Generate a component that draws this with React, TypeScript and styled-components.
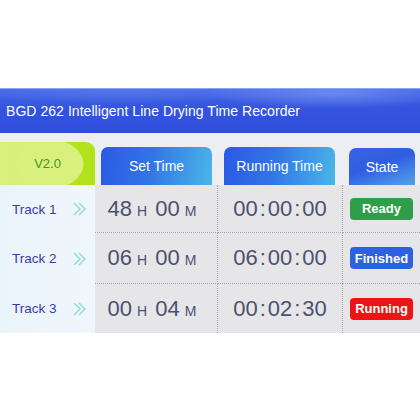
import React from 'react';
import styled, { createGlobalStyle } from 'styled-components';

const GlobalStyle = createGlobalStyle`
  html, body {
    margin: 0;
    padding: 0;
    background: #ffffff;
    font-family: "Liberation Sans", Arial, sans-serif;
  }
`;

const Page = styled.div`
  width: 420px;
  height: 420px;
  padding-top: 88px;
  box-sizing: border-box;
  background: #ffffff;
  overflow: hidden;
`;

const Banner = styled.div`
  height: 45px;
  display: flex;
  align-items: center;
  padding-left: 6px;
  box-sizing: border-box;
  border-top: 1px solid #8ea6f2;
  background:
    radial-gradient(ellipse 180px 22px at 330px 4px, rgba(140, 170, 250, 0.55), transparent 70%),
    radial-gradient(ellipse 260px 18px at 120px 2px, rgba(120, 150, 245, 0.35), transparent 70%),
    linear-gradient(180deg, #4566e4 0%, #3454df 45%, #2f4ddb 100%);
  color: #ffffff;
  font-size: 14px;
  letter-spacing: 0.05px;
`;

const Board = styled.div`
  display: grid;
  grid-template-columns: 95px 123px 125px 77px;
  grid-template-rows: 52px 48px 51px 49px;
  background: #eceef1;
`;

const VersionTab = styled.div`
  margin-top: 9px;
  border-top-right-radius: 9px;
  display: flex;
  align-items: center;
  justify-content: center;
  color: #4b9422;
  font-size: 13px;
  background:
    radial-gradient(ellipse 34px 25px at 50px 22px, #d9f07c 0 96%, transparent 100%),
    linear-gradient(90deg, #d9f07c 0%, #d6ef74 52%, #b6e520 56%, #b2e21a 100%);
`;

const HeadCell = styled.div<{ $left: number; $right: number }>`
  padding: 0 ${(p) => p.$right}px 0 ${(p) => p.$left}px;
  display: flex;
  align-items: flex-end;
`;

const HeadTab = styled.div`
  flex: 1;
  height: 38px;
  border-radius: 7px 7px 0 0;
  display: flex;
  align-items: center;
  justify-content: center;
  color: #ffffff;
  font-size: 14px;
  background: linear-gradient(100deg, #2b59e4 0%, #3275e6 45%, #4ab6e8 100%);
`;

const StateTab = styled(HeadTab)`
  height: 37px;
  background: linear-gradient(160deg, #3a62e2 0%, #2f5ee2 45%, #55a2ea 100%);
`;

const TrackCell = styled.div`
  display: flex;
  align-items: center;
  padding-left: 12px;
  gap: 15px;
  color: #3d3d9f;
  font-size: 13.5px;
  background: linear-gradient(90deg, #eaf4fb 0%, #f0f7fc 100%);
`;

const BodyCell = styled.div<{ $line?: boolean; $divider?: boolean }>`
  display: flex;
  align-items: center;
  justify-content: center;
  background: #e6e6e8;
  color: #4c5170;
  border-bottom: ${(p) => (p.$line ? '1px dotted #a9a9ad' : 'none')};
  border-right: ${(p) => (p.$divider ? '1px dotted #a9a9ad' : 'none')};
  box-sizing: border-box;
`;

const Big = styled.span`
  font-size: 22px;
`;

const Unit = styled.span`
  font-size: 14px;
  margin: 4px 8px 0 5px;
`;

const Colon = styled.span`
  font-size: 22px;
  margin: 0 2px;
`;

const Badge = styled.div<{ $color: string }>`
  width: 63px;
  height: 22px;
  border-radius: 4px;
  background: ${(p) => p.$color};
  color: #ffffff;
  font-weight: bold;
  font-size: 13px;
  display: flex;
  align-items: center;
  justify-content: center;
`;

const StateCell = styled(BodyCell)`
  justify-content: flex-start;
  padding-left: 7px;
`;

const Chevrons = () => (
  <svg width="16" height="16" viewBox="0 0 16 16" fill="none">
    <path d="M2 2 L8 8 L2 14" stroke="#8fd8dc" strokeWidth="1.4" />
    <path d="M7 2 L13 8 L7 14" stroke="#8fd8dc" strokeWidth="1.4" />
  </svg>
);

type Row = {
  track: string;
  h: string;
  m: string;
  run: string[];
  state: string;
  color: string;
};

const rows: Row[] = [
  { track: 'Track 1', h: '48', m: '00', run: ['00', '00', '00'], state: 'Ready', color: '#2f9e4b' },
  { track: 'Track 2', h: '06', m: '00', run: ['06', '00', '00'], state: 'Finished', color: '#2e60e2' },
  { track: 'Track 3', h: '00', m: '04', run: ['00', '02', '30'], state: 'Running', color: '#ee1414' },
];

export default function App() {
  return (
    <Page>
      <GlobalStyle />
      <Banner>BGD 262 Intelligent Line Drying Time Recorder</Banner>
      <Board>
        <VersionTab>V2.0</VersionTab>
        <HeadCell $left={6} $right={6}>
          <HeadTab>Set Time</HeadTab>
        </HeadCell>
        <HeadCell $left={6} $right={8}>
          <HeadTab>Running Time</HeadTab>
        </HeadCell>
        <HeadCell $left={6} $right={5}>
          <StateTab>State</StateTab>
        </HeadCell>
        {rows.map((r, i) => {
          const line = i < rows.length - 1;
          return (
            <React.Fragment key={r.track}>
              <TrackCell>
                {r.track}
                <Chevrons />
              </TrackCell>
              <BodyCell $line={line} $divider>
                <Big>{r.h}</Big>
                <Unit>H</Unit>
                <Big>{r.m}</Big>
                <Unit>M</Unit>
              </BodyCell>
              <BodyCell $line={line} $divider>
                <Big>{r.run[0]}</Big>
                <Colon>:</Colon>
                <Big>{r.run[1]}</Big>
                <Colon>:</Colon>
                <Big>{r.run[2]}</Big>
              </BodyCell>
              <StateCell $line={line}>
                <Badge $color={r.color}>{r.state}</Badge>
              </StateCell>
            </React.Fragment>
          );
        })}
      </Board>
    </Page>
  );
}
